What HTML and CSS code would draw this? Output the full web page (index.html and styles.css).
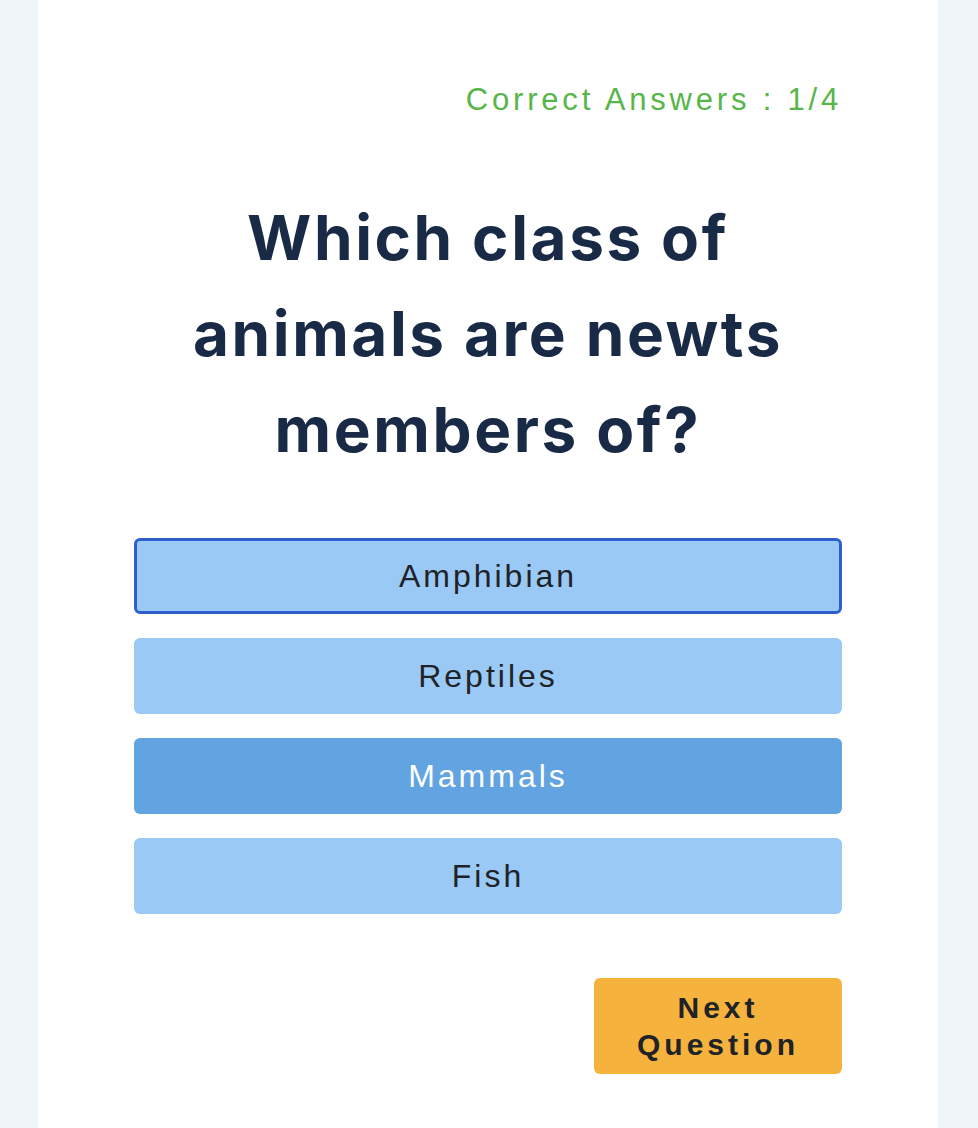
FILE: index.html
```html
<!DOCTYPE html>
<html lang="en">
<head>
<meta charset="utf-8">
<title>Quiz</title>
<link rel="stylesheet" href="styles.css">
</head>
<body>
<main class="card">
  <p class="score">Correct Answers : 1/4</p>
  <h1 class="question">Which class of animals are newts members of?</h1>
  <div class="options">
    <button class="option option--focus">Amphibian</button>
    <button class="option">Reptiles</button>
    <button class="option option--selected">Mammals</button>
    <button class="option">Fish</button>
  </div>
  <div class="actions">
    <button class="next">Next Question</button>
  </div>
</main>
</body>
</html>
```
FILE: styles.css
```css
* { box-sizing: border-box; }
html, body { margin: 0; padding: 0; }
body {
  background: #eff4f8;
  font-family: "Liberation Sans", Arial, sans-serif;
}
.card {
  width: 900px;
  min-height: 1128px;
  margin: 0 0 0 38px;
  background: #ffffff;
  padding: 80px 96px 40px;
}
.score {
  margin: 0;
  text-align: right;
  color: #57b649;
  font-size: 31px;
  line-height: 40px;
  letter-spacing: 3.8px;
}
.question {
  margin: 70px auto 0;
  width: 620px;
  text-align: center;
  font-family: Inter, "Liberation Sans", sans-serif;
  font-weight: 700;
  font-size: 62px;
  line-height: 96px;
  letter-spacing: 2.6px;
  color: #182a45;
}
.options {
  margin-top: 60px;
  display: flex;
  flex-direction: column;
  gap: 24px;
}
.option {
  height: 76px;
  border: 0;
  border-radius: 6px;
  background: #99c9f4;
  color: #1f2227;
  font-family: "Liberation Sans", Arial, sans-serif;
  font-size: 32px;
  letter-spacing: 3px;
  padding: 0;
}
.option--focus {
  border: 3px solid #2c5fcd;
}
.option--selected {
  background: #62a3e1;
  color: #ffffff;
}
.actions {
  margin-top: 64px;
  display: flex;
  justify-content: flex-end;
}
.next {
  width: 248px;
  height: 96px;
  border: 0;
  border-radius: 6px;
  background: #f5b33d;
  color: #1f2227;
  font-family: "Liberation Sans", Arial, sans-serif;
  font-weight: 700;
  font-size: 30px;
  line-height: 37px;
  letter-spacing: 4px;
  padding: 0 16px;
}
```
